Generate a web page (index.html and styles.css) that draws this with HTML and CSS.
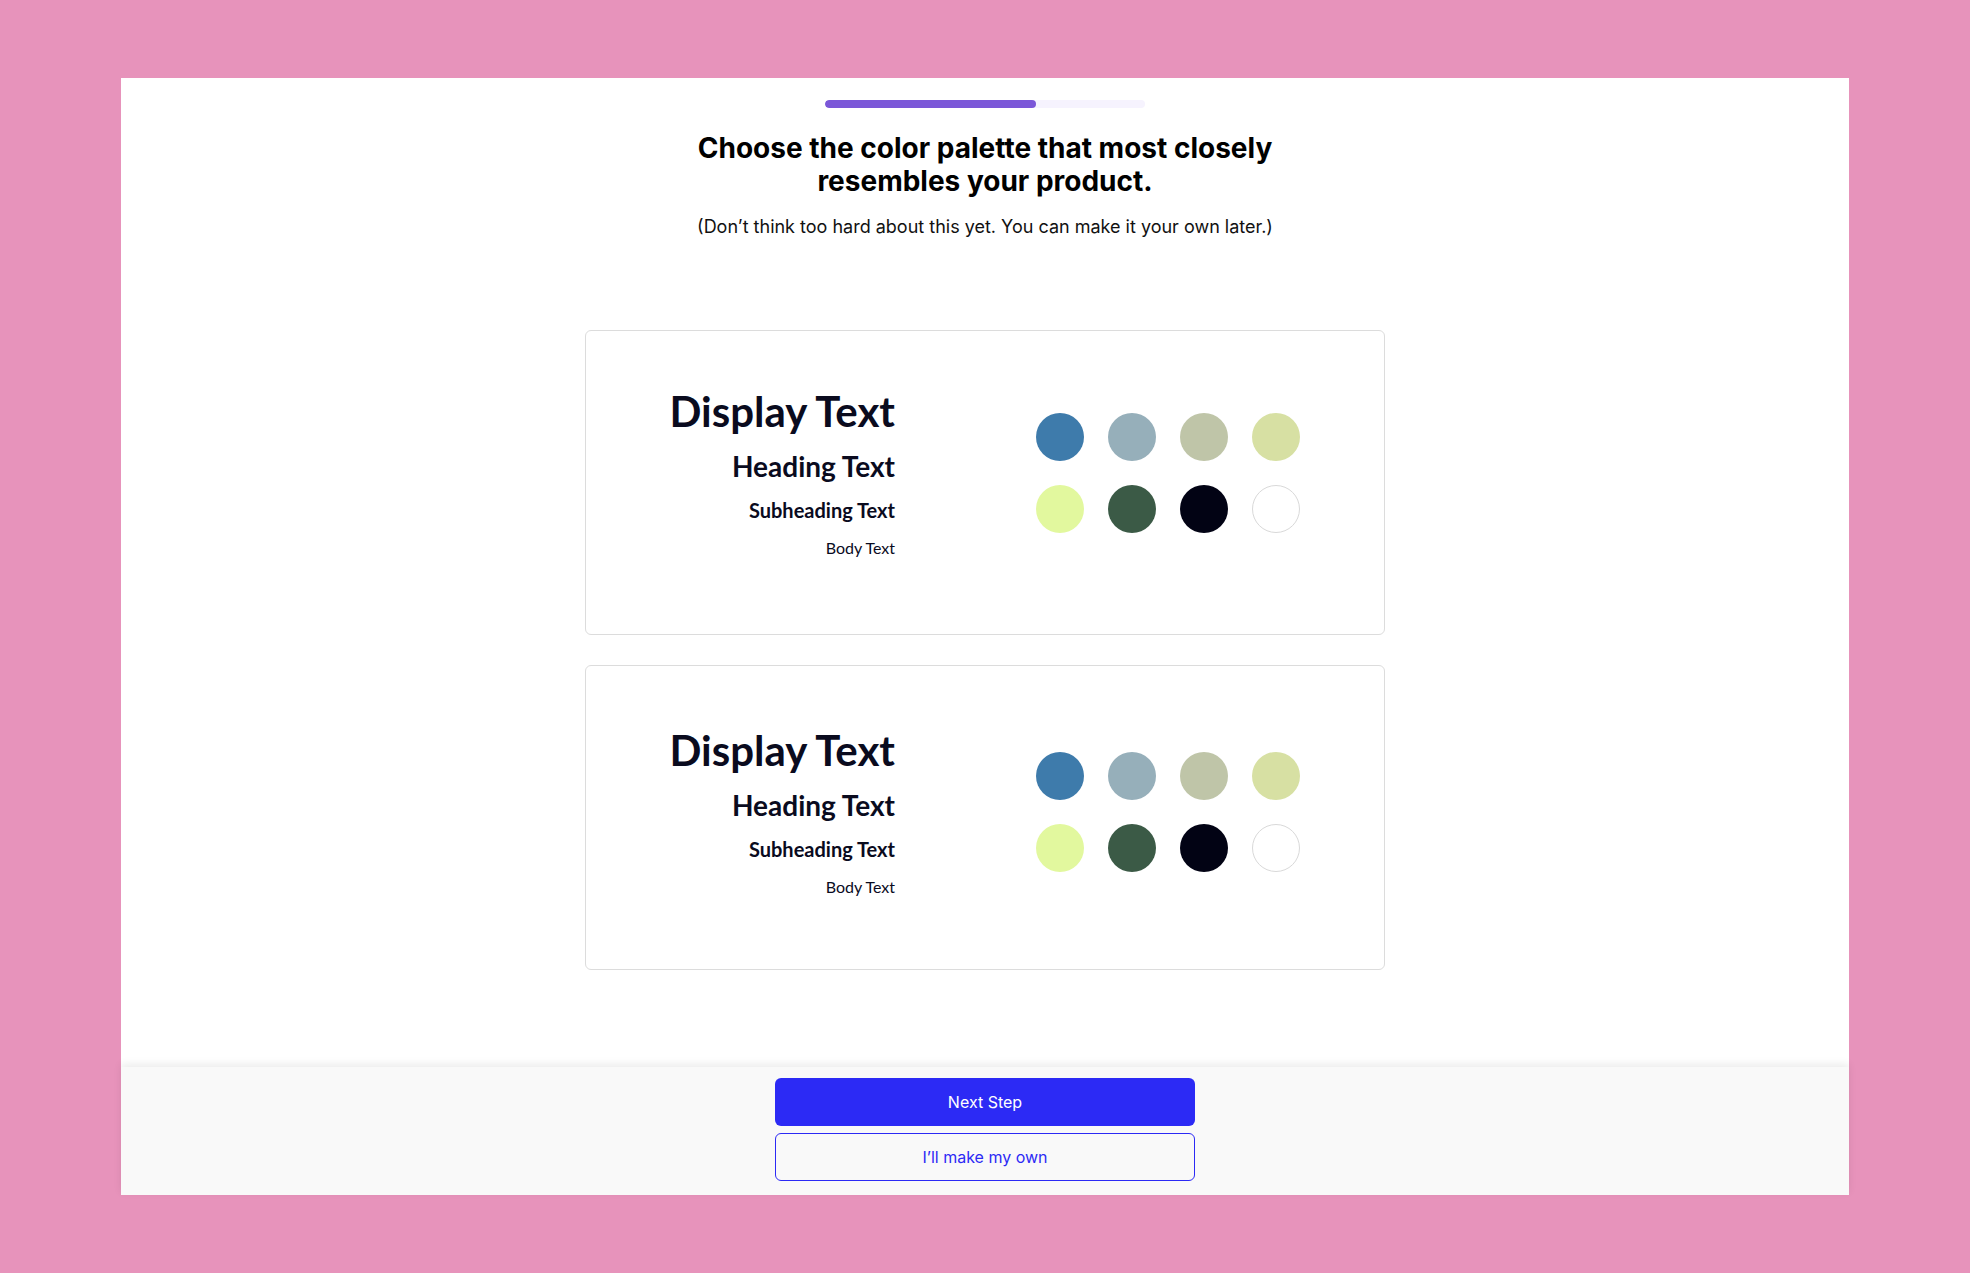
FILE: index.html
```html
<!DOCTYPE html>
<html lang="en">
<head>
<meta charset="utf-8">
<title>Choose a color palette</title>
<link rel="stylesheet" href="styles.css">
</head>
<body>
<div class="panel">
  <main class="main">
    <div class="progress"><div class="progress-fill" style="width: 66%"></div></div>
    <h1 class="title">Choose the color palette that most closely<br>resembles your product.</h1>
    <p class="subtitle">(Don’t think too hard about this yet. You can make it your own later.)</p>

    <div class="cards">
      <div class="card">
        <div class="type-col">
          <div class="t-display">Display Text</div>
          <div class="t-heading">Heading Text</div>
          <div class="t-sub">Subheading Text</div>
          <div class="t-body">Body Text</div>
        </div>
        <div class="swatches">
          <span class="dot c1"></span><span class="dot c2"></span><span class="dot c3"></span><span class="dot c4"></span>
          <span class="dot c5"></span><span class="dot c6"></span><span class="dot c7"></span><span class="dot c8"></span>
        </div>
      </div>
      <div class="card">
        <div class="type-col">
          <div class="t-display">Display Text</div>
          <div class="t-heading">Heading Text</div>
          <div class="t-sub">Subheading Text</div>
          <div class="t-body">Body Text</div>
        </div>
        <div class="swatches">
          <span class="dot c1"></span><span class="dot c2"></span><span class="dot c3"></span><span class="dot c4"></span>
          <span class="dot c5"></span><span class="dot c6"></span><span class="dot c7"></span><span class="dot c8"></span>
        </div>
      </div>
    </div>
  </main>
  <footer class="footer">
    <button class="btn btn-primary">Next Step</button>
    <button class="btn btn-outline">I’ll make my own</button>
  </footer>
</div>
</body>
</html>
```
FILE: styles.css
```css
* { box-sizing: border-box; }
html, body { height: 100%; }
body {
  margin: 0;
  background: #e793bb;
  font-family: Inter, "Noto Sans", sans-serif;
  padding: 78px 121px;
}
.panel {
  height: 100%;
  background: #ffffff;
  display: flex;
  flex-direction: column;
}
.main {
  flex: 1;
  display: flex;
  flex-direction: column;
  align-items: center;
  padding-top: 22px;
}
.progress {
  width: 320px;
  height: 8px;
  border-radius: 4px;
  background: #f6f3fe;
  overflow: hidden;
}
.progress-fill {
  height: 100%;
  background: #7b57d8;
  border-radius: 4px;
}
.title {
  margin: 24px 0 0;
  font-size: 28px;
  line-height: 33px;
  font-weight: 700;
  color: #000;
  text-align: center;
}
.subtitle {
  margin: 17px 0 0;
  font-size: 18px;
  line-height: 24px;
  color: #111;
  text-align: center;
}
.cards {
  margin-top: 91px;
  display: flex;
  flex-direction: column;
  gap: 30px;
}
.card {
  width: 800px;
  height: 305px;
  border: 1px solid #dcdcdc;
  border-radius: 6px;
  display: flex;
  align-items: center;
  padding: 0 84px 19px 83px;
  gap: 141px;
  font-family: Lato, "Noto Sans", sans-serif;
  color: #0a0b1e;
}
.card + .card {
  padding-bottom: 11px;
}
.type-col {
  width: 226px;
  margin-bottom: 4px;
  display: flex;
  flex-direction: column;
  align-items: flex-end;
  text-align: right;
  white-space: nowrap;
}
.t-display { font-size: 42px; line-height: 50px; font-weight: 700; }
.t-heading { font-size: 28px; line-height: 34px; font-weight: 700; margin-top: 13px; }
.t-sub { font-size: 20px; line-height: 24px; font-weight: 700; margin-top: 15px; }
.t-body { font-size: 16px; line-height: 19px; font-weight: 400; margin-top: 16px; }
.swatches {
  display: grid;
  grid-template-columns: repeat(4, 48px);
  grid-auto-rows: 48px;
  gap: 24px;
}
.dot { width: 48px; height: 48px; border-radius: 50%; display: block; }
.c1 { background: #3e7bab; }
.c2 { background: #96afba; }
.c3 { background: #bfc5a8; }
.c4 { background: #d7e0a3; }
.c5 { background: #e2f89e; }
.c6 { background: #3b5a46; }
.c7 { background: #020314; }
.c8 { background: #fff; border: 1px solid #d9d9d9; }
.footer {
  height: 128px;
  flex: none;
  background: #f9f9f9;
  box-shadow: 0 -3px 8px rgba(0, 0, 0, 0.08);
  display: flex;
  flex-direction: column;
  align-items: center;
  padding-top: 11px;
  gap: 7px;
}
.btn {
  width: 420px;
  height: 48px;
  border-radius: 6px;
  font-family: Inter, "Noto Sans", sans-serif;
  font-size: 16px;
  font-weight: 400;
  cursor: pointer;
}
.btn-primary {
  background: #2c2af5;
  color: #fff;
  border: none;
}
.btn-outline {
  background: transparent;
  color: #2c2af5;
  border: 1px solid #2c2af5;
}
```
